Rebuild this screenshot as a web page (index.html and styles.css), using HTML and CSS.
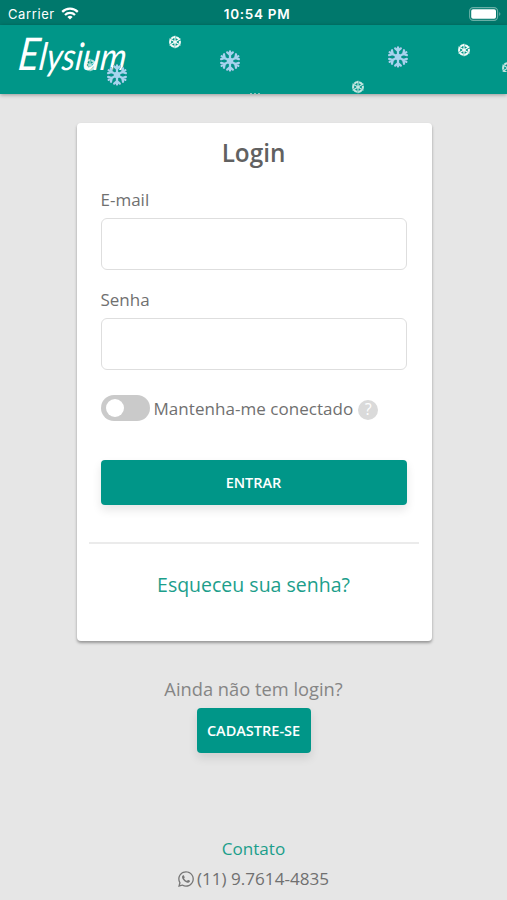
FILE: index.html
```html
<!DOCTYPE html>
<html lang="pt-BR">
<head>
  <title>Elysium - Login</title>
  <meta charset="utf-8">
  <meta name="viewport" content="width=device-width, initial-scale=1.0">
  <link rel="stylesheet" href="styles.css">
</head>
<body>
  <svg class="symbols" width="0" height="0">
    <symbol id="flake-blue" viewBox="-12 -12 24 24">
      <g fill="none" stroke-linecap="round">
        <g id="blue-arm"><path d="M0 0V-9.6M-2.8-8.6L0-6L2.8-8.6"/></g>
        <use href="#blue-arm" transform="rotate(60)"/>
        <use href="#blue-arm" transform="rotate(120)"/>
        <use href="#blue-arm" transform="rotate(180)"/>
        <use href="#blue-arm" transform="rotate(240)"/>
        <use href="#blue-arm" transform="rotate(300)"/>
        <circle r="2"/>
      </g>
    </symbol>
    <symbol id="flake-white" viewBox="-8 -8 16 16">
      <g fill="none" stroke="#f4faf7" stroke-width="1.3">
        <circle r="5.6" stroke-width="2.3" stroke-dasharray="4.6 1.264" stroke-dashoffset="2.3"/>
        <g id="white-arm"><path d="M0-1V-7.2"/></g>
        <use href="#white-arm" transform="rotate(60)"/>
        <use href="#white-arm" transform="rotate(120)"/>
        <use href="#white-arm" transform="rotate(180)"/>
        <use href="#white-arm" transform="rotate(240)"/>
        <use href="#white-arm" transform="rotate(300)"/>
      </g>
      <circle r="1.8" fill="#f4faf7"/>
    </symbol>
  </svg>

  <div class="status-bar">
    <div class="carrier">
      <span>Carrier</span>
      <svg width="18" height="13" viewBox="0 0 18 13">
        <g fill="none" stroke="#fff" stroke-width="2.2">
          <path d="M1.2 4.9A11 11 0 0 1 16.8 4.9"/>
          <path d="M4 7.9A7 7 0 0 1 14 7.9"/>
        </g>
        <path d="M9 12.6L6.4 10A3.7 3.7 0 0 1 11.6 10Z" fill="#fff"/>
      </svg>
    </div>
    <div class="time">10:54 PM</div>
    <div class="battery">
      <svg width="32" height="14" viewBox="0 0 32 14">
        <rect x=".6" y=".6" width="28" height="12.8" rx="3.6" fill="none" stroke="#69afa6" stroke-width="1.1"/>
        <rect x="2.2" y="2.2" width="24.8" height="9.6" rx="1.8" fill="#fff"/>
        <path d="M30.2 5Q32.6 7 30.2 9Z" fill="#69afa6"/>
      </svg>
    </div>
  </div>

  <div class="header">
    <div class="logo">Elysium</div>
    <svg class="flake small f1"><use href="#flake-white"/></svg>
    <svg class="flake big f2"><use href="#flake-blue"/></svg>
    <svg class="flake small f3"><use href="#flake-white"/></svg>
    <svg class="flake big f4"><use href="#flake-blue"/></svg>
    <svg class="flake small f5" viewBox="0 0 14 2"><path d="M2 1.5h2M6 1.5h2M10 1.5h2" stroke="#84c6bd"/></svg>
    <svg class="flake small f6"><use href="#flake-white"/></svg>
    <svg class="flake big f7"><use href="#flake-blue"/></svg>
    <svg class="flake small f8"><use href="#flake-white"/></svg>
    <div class="edge"><svg class="small"><use href="#flake-white"/></svg></div>
  </div>

  <div class="container">
    <form class="card">
      <h1>Login</h1>
      <label for="email">E-mail</label>
      <input class="field" type="email" id="email">
      <label for="senha">Senha</label>
      <input class="field" type="password" id="senha">
      <div class="keep">
        <span class="switch"><span class="knob"></span></span>
        <span class="keep-text">Mantenha-me conectado</span>
        <span class="help">?</span>
      </div>
      <button type="button" class="btn btn-block">ENTRAR</button>
      <hr>
      <a class="forgot" href="#">Esqueceu sua senha?</a>
    </form>

    <div class="register">
      <p>Ainda não tem login?</p>
      <button type="button" class="btn btn-register">CADASTRE-SE</button>
    </div>

    <div class="contact">
      <a href="#">Contato</a>
      <p>
        <svg width="16" height="18" viewBox="0 0 448 512"><path fill="#777" d="M380.900 97.100C339 55.100 283.200 32 223.900 32c-122.400 0-222 99.600-222 222 0 39.100 10.200 77.300 29.600 111L0 480l117.700-30.900c32.400 17.700 68.900 27 106.100 27h.1c122.300 0 224.100-99.600 224.100-222 0-59.300-25.200-115-67.100-157zm-157 341.600c-33.200 0-65.700-8.900-94-25.700l-6.700-4-69.800 18.300L72 359.200l-4.400-7c-18.500-29.400-28.200-63.300-28.200-98.200 0-101.700 82.800-184.500 184.600-184.500 49.300 0 95.600 19.200 130.400 54.100 34.800 34.900 56.200 81.200 56.100 130.500 0 101.800-84.900 184.600-186.600 184.600zm101.200-138.200c-5.500-2.800-32.800-16.200-37.900-18-5.100-1.900-8.800-2.800-12.500 2.800-3.700 5.600-14.300 18-17.600 21.800-3.200 3.700-6.500 4.200-12 1.400-32.600-16.300-54-29.100-75.500-66-5.700-9.800 5.700-9.100 16.300-30.300 1.800-3.700.9-6.900-.5-9.700-1.400-2.800-12.500-30.100-17.100-41.200-4.500-10.800-9.100-9.300-12.500-9.500-3.200-.2-6.900-.2-10.600-.2-3.700 0-9.700 1.400-14.800 6.900-5.100 5.600-19.400 19-19.400 46.300 0 27.300 19.900 53.700 22.600 57.400 2.800 3.700 39.100 59.700 94.800 83.800 35.200 15.200 49 16.500 66.600 13.900 10.700-1.600 32.800-13.400 37.400-26.400 4.600-13 4.600-24.100 3.200-26.400-1.300-2.500-5-3.900-10.500-6.600z"/></svg>
        <span>(11) 9.7614-4835</span>
      </p>
    </div>
  </div>
</body>
</html>
```
FILE: styles.css
```css
* {
  margin: 0;
  padding: 0;
  box-sizing: border-box;
}

body {
  font-family: "Open Sans", "Noto Sans", sans-serif;
  background: #e6e6e6;
  color: #707070;
  height: 900px;
  overflow: hidden;
}

.symbols {
  display: block;
}

.status-bar {
  height: 25px;
  padding: 2px 6px 0 8px;
  background: #00786c;
  color: #fff;
  font-family: Inter, sans-serif;
  font-size: 13px;
  display: grid;
  grid-template-columns: 1fr auto 1fr;
  align-items: center;
}

.carrier {
  display: flex;
  align-items: center;
  gap: 6px;
  letter-spacing: 0.6px;
}

.time {
  font-size: 13.5px;
  font-weight: 600;
  letter-spacing: 0.7px;
  margin-left: 5px;
}

.battery {
  display: flex;
  justify-content: flex-end;
}

.header {
  position: relative;
  height: 69px;
  padding-left: 19px;
  background: #009688;
  box-shadow: 0 1px 4px rgba(0,0,0,0.35);
}

.logo {
  width: max-content;
  color: #fff;
  font-family: Lato, cursive;
  font-style: italic;
  font-size: 33px;
  line-height: 56px;
  transform: scaleY(1.15) skewX(-8deg);
}

.logo::first-letter {
  font-size: 39px;
}

.flake {
  position: absolute;
}

.small {
  width: 14px;
  height: 14px;
}

.big {
  width: 24px;
  height: 24px;
  stroke: #a5d5ee;
  stroke-width: 2.3;
  filter: drop-shadow(0 0 0.7px #245f78);
}

.f1 { left: 83px; top: 33px; opacity: 0.75; }
.f2 { left: 105px; top: 38px; }
.f3 { left: 168px; top: 10px; }
.f4 { left: 218px; top: 24px; }
.f5 { left: 248px; top: 67px; height: 2px; }
.f6 { left: 351px; top: 55px; opacity: 0.8; }
.f7 { left: 386px; top: 20px; }
.f8 { left: 457px; top: 18px; }

.edge {
  position: absolute;
  right: 0;
  top: 33px;
  width: 6px;
  height: 14px;
  overflow: hidden;
  opacity: 0.8;
}

.container {
  display: flex;
  flex-direction: column;
  align-items: center;
  padding-top: 29px;
}

.card {
  width: 355px;
  height: 518px;
  margin-left: 1px;
  padding: 13px 25px 0 24px;
  background: #fff;
  border-radius: 4px;
  box-shadow: 0 2px 3px rgba(0,0,0,0.35);
  display: flex;
  flex-direction: column;
}

h1 {
  color: #616161;
  font-size: 24.3px;
  font-weight: 600;
  line-height: 34px;
  text-align: center;
  margin-bottom: 17px;
}

label {
  font-size: 17px;
  line-height: 26px;
}

.field {
  height: 52px;
  margin: 5px 0 17px;
  padding: 0 12px;
  border: 1px solid #dedede;
  border-radius: 6px;
  font: inherit;
}

.keep {
  display: flex;
  align-items: center;
  height: 26px;
  margin-top: 8px;
  font-size: 17px;
  letter-spacing: 0.04px;
}

.switch {
  width: 49px;
  height: 26px;
  padding: 4px 5px;
  border-radius: 13px;
  background: #cacaca;
}

.knob {
  display: block;
  width: 18px;
  height: 18px;
  border-radius: 50%;
  background: #fff;
}

.keep-text {
  margin-left: 4px;
}

.help {
  width: 20px;
  height: 20px;
  margin: 3px 0 0 5px;
  border-radius: 50%;
  background: #dadada;
  color: #fff;
  font-size: 16px;
  line-height: 19px;
  text-align: center;
}

.btn {
  height: 45px;
  border: none;
  border-radius: 4px;
  background: #009688;
  color: #fff;
  font-family: inherit;
  font-size: 14.5px;
  font-weight: 600;
  box-shadow: 0 5px 10px rgba(0,0,0,0.1);
}

.btn-block {
  margin-top: 39px;
}

hr {
  margin: 37px -12px 0;
  border: none;
  border-top: 2px solid #ebebeb;
}

a {
  color: #1c9e8b;
  text-decoration: none;
}

.forgot {
  margin-top: 27px;
  font-size: 19.5px;
  line-height: 28px;
  text-align: center;
}

.register {
  margin-top: 34px;
  text-align: center;
}

.register p {
  color: #858585;
  font-size: 18.3px;
  line-height: 28px;
  margin-bottom: 5px;
}

.btn-register {
  width: 114px;
}

.contact {
  margin-top: 81px;
  font-size: 17.1px;
  line-height: 30px;
  text-align: center;
}

.contact p {
  display: flex;
  align-items: center;
  justify-content: center;
  gap: 3px;
}
```
